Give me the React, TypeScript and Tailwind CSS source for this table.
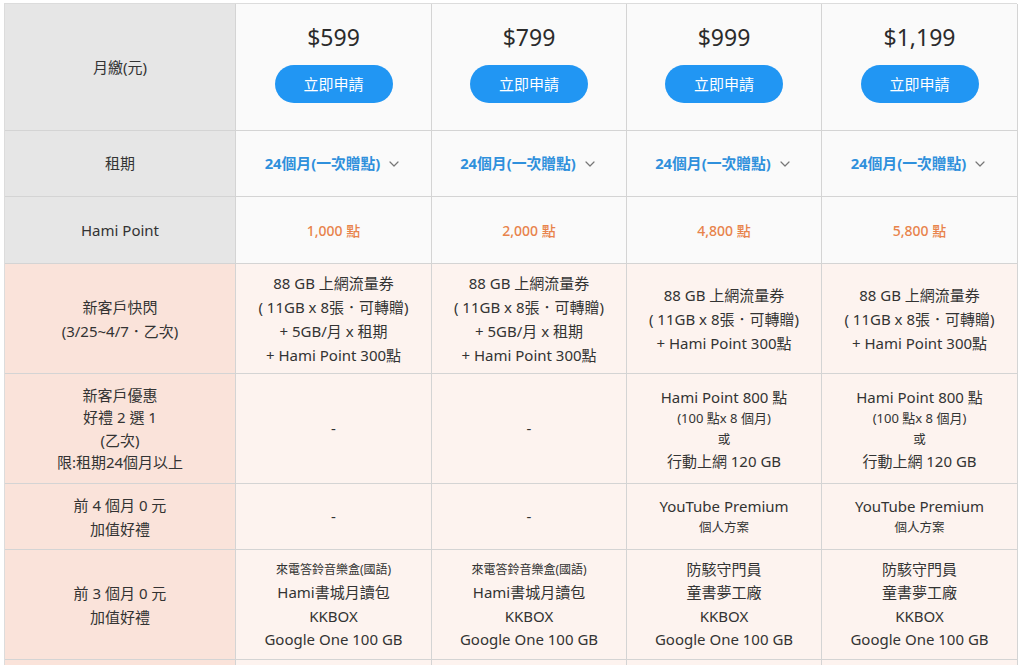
import { ChevronDown } from "lucide-react";

const plans = [
  { price: "$599", points: "1,000 點" },
  { price: "$799", points: "2,000 點" },
  { price: "$999", points: "4,800 點" },
  { price: "$1,199", points: "5,800 點" },
];

const Small = ({ children, wide }: { children: React.ReactNode; wide?: boolean }) => (
  <span className={wide ? "text-[13px] leading-[21px]" : "text-[12.5px] leading-[21px]"}>{children}</span>
);

const flashLow = ["88 GB 上網流量券", "( 11GB x 8張．可轉贈)", "+ 5GB/月 x 租期", "+ Hami Point 300點"];
const flashHigh = ["88 GB 上網流量券", "( 11GB x 8張．可轉贈)", "+ Hami Point 300點"];

const App = () => {
  const head = "flex items-center justify-center text-center border-r border-b border-[#d4d4d4]";
  const gray = `${head} bg-[#e6e6e6]`;
  const pink = `${head} bg-[#fae3da]`;
  const cellTop = `${head} bg-[#fafafa]`;
  const cellPink = `${head} bg-[#fdf3ef]`;

  return (
    <div
      className="h-[665px] overflow-hidden bg-white pl-[4px] pt-[3px] text-[15px] text-[#333]"
      style={{ fontFamily: '"Noto Sans", "Noto Sans CJK TC", sans-serif' }}
    >
      <div className="grid w-[1013px] grid-cols-[231px_196px_195px_195px_196px] grid-rows-[127px_66px_67px_110px_110px_66px_110px_60px] border-l border-t border-[#dcdcdc]">
        {/* 月繳 */}
        <div className={gray}>月繳(元)</div>
        {plans.map((p) => (
          <div key={p.price} className={`${cellTop} flex-col gap-[13px] pb-[9px]`}>
            <div className="text-[23px] leading-[30px] text-[#2b2b2b]">{p.price}</div>
            <button className="h-[38px] w-[118px] rounded-full bg-[#2196f3] text-[15px] text-white">
              立即申請
            </button>
          </div>
        ))}

        {/* 租期 */}
        <div className={gray}>租期</div>
        {plans.map((p) => (
          <div key={p.price + "r"} className={`${cellTop} gap-[6px]`}>
            <span className="text-[14.8px] font-bold text-[#2f90dc]">24個月(一次贈點)</span>
            <ChevronDown className="h-[16px] w-[16px] text-[#777]" strokeWidth={1.8} />
          </div>
        ))}

        {/* Hami Point */}
        <div className={gray}>Hami Point</div>
        {plans.map((p) => (
          <div key={p.price + "p"} className={`${cellTop} text-[14px] font-medium text-[#e8834b]`}>
            {p.points}
          </div>
        ))}

        {/* 新客戶快閃 */}
        <div className={`${pink} flex-col leading-[24px]`}>
          <span>新客戶快閃</span>
          <span>(3/25~4/7．乙次)</span>
        </div>
        {[flashLow, flashLow, flashHigh, flashHigh].map((lines, i) => (
          <div key={"f" + i} className={`${cellPink} flex-col leading-[24px]`}>
            {lines.map((l) => (
              <span key={l}>{l}</span>
            ))}
          </div>
        ))}

        {/* 新客戶優惠 */}
        <div className={`${pink} flex-col leading-[22.5px]`}>
          <span>新客戶優惠</span>
          <span>好禮 2 選 1</span>
          <span>(乙次)</span>
          <span>限:租期24個月以上</span>
        </div>
        <div className={cellPink}>-</div>
        <div className={cellPink}>-</div>
        {[0, 1].map((i) => (
          <div key={"g" + i} className={`${cellPink} flex-col leading-[22px]`}>
            <span>Hami Point 800 點</span>
            <Small wide>(100 點x 8 個月)</Small>
            <Small>或</Small>
            <span>行動上網 120 GB</span>
          </div>
        ))}

        {/* 前 4 個月 */}
        <div className={`${pink} flex-col leading-[24px]`}>
          <span>前 4 個月 0 元</span>
          <span>加值好禮</span>
        </div>
        <div className={cellPink}>-</div>
        <div className={cellPink}>-</div>
        {[0, 1].map((i) => (
          <div key={"y" + i} className={`${cellPink} flex-col leading-[22px]`}>
            <span>YouTube Premium</span>
            <Small>個人方案</Small>
          </div>
        ))}

        {/* 前 3 個月 */}
        <div className={`${pink} flex-col leading-[24px]`}>
          <span>前 3 個月 0 元</span>
          <span>加值好禮</span>
        </div>
        {[0, 1].map((i) => (
          <div key={"k" + i} className={`${cellPink} flex-col leading-[23.5px]`}>
            <span className="text-[12px]">來電答鈴音樂盒(國語)</span>
            <span>Hami書城月讀包</span>
            <span>KKBOX</span>
            <span>Google One 100 GB</span>
          </div>
        ))}
        {[0, 1].map((i) => (
          <div key={"s" + i} className={`${cellPink} flex-col leading-[23.5px]`}>
            <span>防駭守門員</span>
            <span>童書夢工廠</span>
            <span>KKBOX</span>
            <span>Google One 100 GB</span>
          </div>
        ))}

        {/* next row, cut off */}
        <div className={pink}></div>
        <div className={cellPink}></div>
        <div className={cellPink}></div>
        <div className={cellPink}></div>
        <div className={cellPink}></div>
      </div>
    </div>
  );
};

export default App;
